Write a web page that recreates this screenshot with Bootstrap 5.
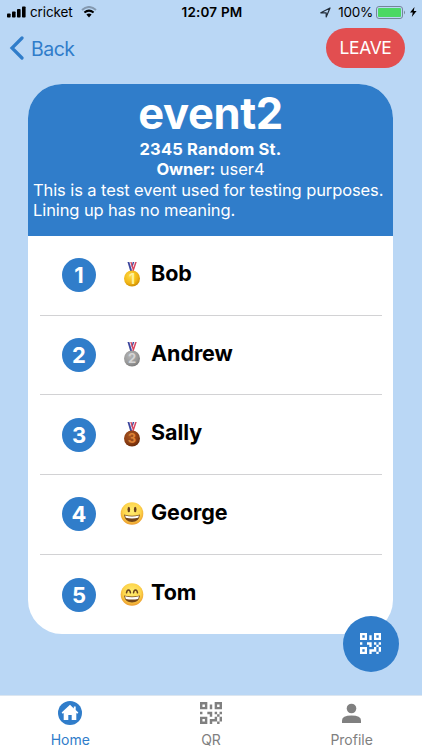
<!DOCTYPE html>
<html lang="en">
<head>
<meta charset="utf-8">
<meta name="viewport" content="width=device-width, initial-scale=1">
<title>event2</title>
<link href="https://cdn.jsdelivr.net/npm/bootstrap@5.3.0/dist/css/bootstrap.min.css" rel="stylesheet">
<style>
:root{--brand:#307dca;--sky:#bad7f5}
body{font-family:Inter,"Liberation Sans",sans-serif;background:var(--sky);color:#000;height:750px;overflow:hidden}
svg{display:block;flex:none}
.statusbar{height:24px;font-size:13.5px;line-height:24px;padding:0 5px 0 7px}
.statusbar>div{flex:1 1 0}
.carrier{letter-spacing:-.1px;margin:0 8px 0 4px}
.clock{font-size:13.5px;letter-spacing:.2px}
.percent{letter-spacing:-.25px;margin:0 3px 0 7px}
.topbar{height:60px;padding:4px 17px 16px 9px}
.back{color:var(--brand);font-size:19.5px;letter-spacing:-.5px;gap:7px;line-height:40px;text-decoration:none}
.back span{padding-top:1px}
.leave{width:79px;height:40px;background:#e24e50;color:#fff;font-size:17.5px;letter-spacing:-.4px;padding:0}
.event{width:365px;height:550px;margin-left:28px;border-radius:34px;background:#fff}
.event-head{height:152px;background:var(--brand);color:#fff;padding:1px 5px 0;font-size:16.5px;line-height:20.4px}
.event-title{font-size:43.5px;line-height:54px;letter-spacing:-.4px;font-weight:700;margin:0;padding-top:1px;height:54px}
.address{letter-spacing:.2px}
.owner{letter-spacing:-.05px}
.about{letter-spacing:-.1px}
.guests{padding:0 11px 0 12px}
.guest{height:79.7px;padding-left:22px;border-bottom:1px solid #d2d2d4}
.guest:last-child{border:0}
.place{width:34px;height:34px;background:var(--brand);color:#fff;font-size:22px;line-height:34px}
.prize{margin:0 7px 0 24px}
.guest-name{font-size:21.5px;line-height:28px;letter-spacing:-.03px;margin-bottom:5px}
.fab{width:56px;height:56px;left:343px;top:616px;background:var(--brand);color:#fff;border:0;padding:0 2px 2px 0}
.tabs{height:55px;background:#fff;border-top:1px solid #dce6f0}
.tab{color:#808080;font-size:14px;line-height:18px;padding-top:4px;gap:5px;text-decoration:none}
.tab.on{color:var(--brand)}
</style>
</head>
<body>
<svg width="0" height="0" class="position-absolute">
<defs>
<radialGradient id="gold" cx=".4" cy=".35" r=".7"><stop offset="0" stop-color="#ffdc45"/><stop offset=".65" stop-color="#f0b414"/><stop offset="1" stop-color="#c98800"/></radialGradient>
<radialGradient id="silver" cx=".4" cy=".35" r=".7"><stop offset="0" stop-color="#b5b5b5"/><stop offset=".65" stop-color="#999"/><stop offset="1" stop-color="#777"/></radialGradient>
<radialGradient id="bronze" cx=".4" cy=".35" r=".7"><stop offset="0" stop-color="#a85522"/><stop offset=".65" stop-color="#8b3d12"/><stop offset="1" stop-color="#652606"/></radialGradient>
<radialGradient id="face" cx=".5" cy=".4" r=".6"><stop offset="0" stop-color="#ffee72"/><stop offset=".65" stop-color="#fdd44b"/><stop offset="1" stop-color="#eb9a2c"/></radialGradient>
<symbol id="ribbon" viewBox="0 0 24 26"><path d="M7.500 0h9l-3 9h-3z" fill="#eceaf5"/><path d="M7.500 0h1.800l2.900 9h-2zM12.800 0h1.400l-2 6-.7-2z" fill="#3c459c"/><path d="M10.300 0h1.300l2 6.500-.8 1.500zM15.300 0h1.400l-3 9h-1.500z" fill="#dc4058"/></symbol>
<symbol id="qr" viewBox="3 3 18 18"><path fill="currentColor" d="M3,11H5V13H3V11M11,5H13V9H11V5M9,11H13V15H11V13H9V11M15,11H17V13H19V11H21V13H19V15H21V19H19V21H17V19H13V21H11V17H15V15H17V13H15V11M19,19V15H17V19H19M15,3H21V9H15V3M17,5V7H19V5H17M3,3H9V9H3V3M5,5V7H7V5H5M3,15H9V21H3V15M5,17V19H7V17H5Z"/></symbol>
</defs>
</svg>

<div class="statusbar d-flex align-items-center">
  <div class="d-flex align-items-center">
    <svg width="19" height="12" viewBox="0 0 19 12"><rect y="7.500" width="3.600" height="4" rx=".8"/><rect x="5" y="5.500" width="3.600" height="6" rx=".8"/><rect x="10" y="3" width="3.600" height="8.500" rx=".8"/><rect x="15" y=".5" width="3.600" height="11" rx=".8"/></svg>
    <span class="carrier">cricket</span>
    <svg width="16" height="12" viewBox="0 0 16 12"><path d="M1 4Q8-2 15 4" fill="none" stroke="#8499b0" stroke-width="2"/><path d="M3.400 6.500Q8 2.800 12.600 6.500" fill="none" stroke="#000" stroke-width="2"/><path d="M5.400 8.600Q8 6.600 10.600 8.600L8 11.500z"/></svg>
  </div>
  <span class="clock fw-semibold">12:07 PM</span>
  <div class="d-flex align-items-center justify-content-end">
    <svg width="11" height="11" viewBox="0 0 11 11"><path d="M.8 5.800 10 1 6.200 10V5.800z" fill="none" stroke="#222c38" stroke-width="1.200" stroke-linejoin="round"/></svg>
    <span class="percent">100%</span>
    <svg width="30" height="13" viewBox="0 0 30 13"><rect x=".5" y=".5" width="26" height="12" rx="2.500" fill="none" stroke="#748699"/><rect x="2" y="2" width="23" height="9" rx="1" fill="#4bd964"/><path d="M28 4.500q2 2 0 4z" fill="#748699"/></svg>
    <svg class="ms-1" width="7" height="10" viewBox="0 0 7 10"><path d="M4.500 0 0 5.500h2.800L1.800 10 6.600 4H3.800z"/></svg>
  </div>
</div>

<nav class="topbar d-flex justify-content-between align-items-center">
  <a href="#" class="back d-flex align-items-center"><svg width="15" height="24" viewBox="0 0 15 24"><path d="M13 2 3 12l10 10" fill="none" stroke="currentColor" stroke-width="3.200" stroke-linecap="round"/></svg><span>Back</span></a>
  <button class="leave btn rounded-pill">LEAVE</button>
</nav>

<main class="event overflow-hidden">
  <header class="event-head">
    <h1 class="event-title text-center">event2</h1>
    <div class="address text-center fw-bold">2345 Random St.</div>
    <div class="owner text-center"><b>Owner:</b> user4</div>
    <div class="about">This is a test event used for testing purposes. Lining up has no meaning.</div>
  </header>
  <div class="guests d-flex flex-column">
    <div class="guest d-flex align-items-center">
      <span class="place rounded-circle fw-bold text-center">1</span>
      <svg class="prize" width="24" height="26" viewBox="0 0 24 26"><use href="#ribbon" width="24" height="26"/><circle cx="12" cy="16.500" r="8" fill="url(#gold)"/><text x="12" y="21.500" font-size="14" font-weight="700" text-anchor="middle" fill="#fff19a">1</text></svg>
      <span class="guest-name fw-bold">Bob</span>
    </div>
    <div class="guest d-flex align-items-center">
      <span class="place rounded-circle fw-bold text-center">2</span>
      <svg class="prize" width="24" height="26" viewBox="0 0 24 26"><use href="#ribbon" width="24" height="26"/><circle cx="12" cy="16.500" r="8" fill="url(#silver)"/><text x="12" y="21.300" font-size="13" font-weight="700" text-anchor="middle" fill="#d4d4d4">2</text></svg>
      <span class="guest-name fw-bold">Andrew</span>
    </div>
    <div class="guest d-flex align-items-center">
      <span class="place rounded-circle fw-bold text-center">3</span>
      <svg class="prize" width="24" height="26" viewBox="0 0 24 26"><use href="#ribbon" width="24" height="26"/><circle cx="12" cy="16.500" r="8" fill="url(#bronze)"/><text x="12" y="21.300" font-size="13" font-weight="700" text-anchor="middle" fill="#dc8236">3</text></svg>
      <span class="guest-name fw-bold">Sally</span>
    </div>
    <div class="guest d-flex align-items-center">
      <span class="place rounded-circle fw-bold text-center">4</span>
      <svg class="prize" width="24" height="26" viewBox="0 0 24 26"><circle cx="12" cy="12.500" r="11.300" fill="url(#face)"/><ellipse cx="8.800" cy="8.500" rx="1.300" ry="2.700" fill="#69401c"/><ellipse cx="15.200" cy="8.500" rx="1.300" ry="2.700" fill="#69401c"/><path d="M4 13.500q8 2.600 16 0-1 7.500-8 7.500t-8-7.500z" fill="#744619"/><path d="M5 14.500q7 2 14 0l-.8 2.300q-6.200 1.400-12.400 0z" fill="#fff"/></svg>
      <span class="guest-name fw-bold">George</span>
    </div>
    <div class="guest d-flex align-items-center">
      <span class="place rounded-circle fw-bold text-center">5</span>
      <svg class="prize" width="24" height="26" viewBox="0 0 24 26"><circle cx="12" cy="12.500" r="11.300" fill="url(#face)"/><path d="M6.500 10.800q.5-2.800 2-2.800t2 2.800M13.500 10.800q.5-2.800 2-2.800t2 2.800" fill="none" stroke="#69401c" stroke-width="1.500" stroke-linecap="round"/><path d="M4 13.500q8 2 16 0-1 7-8 7t-8-7z" fill="#744619"/><path d="M5 14.300q7 1.700 14 0l-.8 2.600q-6.200 1.300-12.400 0z" fill="#fff"/></svg>
      <span class="guest-name fw-bold">Tom</span>
    </div>
  </div>
</main>

<button class="fab btn rounded-circle position-fixed d-flex align-items-center justify-content-center" aria-label="QR"><svg width="21" height="21"><use href="#qr"/></svg></button>

<nav class="tabs fixed-bottom d-flex">
  <a href="#" class="tab on col-4 d-flex flex-column align-items-center"><svg width="26" height="26" viewBox="0 0 26 26"><circle cx="13" cy="13" r="12" fill="currentColor"/><path d="M13 4.800 4.600 12.600l1.100 1.200 1-.8v7h4.600v-5h3.400v5h4.600v-7l1 .8 1.100-1.200-2.700-2.500V6.500h-1.900v2z" fill="#fff"/></svg><span>Home</span></a>
  <a href="#" class="tab col-4 d-flex flex-column align-items-center"><svg width="26" height="26" viewBox="0 0 26 26"><use href="#qr" x="2" y="2" width="22" height="22"/></svg><span>QR</span></a>
  <a href="#" class="tab col-4 d-flex flex-column align-items-center"><svg width="26" height="26" viewBox="0 0 26 26"><circle cx="12.500" cy="8.500" r="4.800" fill="currentColor"/><path d="M3 23v-2.500q0-5 9.500-5t9.500 5V23z" fill="currentColor"/></svg><span>Profile</span></a>
</nav>
<script src="https://cdn.jsdelivr.net/npm/bootstrap@5.3.0/dist/js/bootstrap.bundle.min.js"></script>
</body>
</html>
